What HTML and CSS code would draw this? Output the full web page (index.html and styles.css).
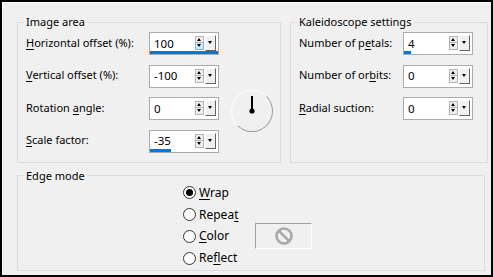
FILE: index.html
```html
<!DOCTYPE html>
<html>
<head>
<meta charset="utf-8">
<link rel="stylesheet" href="styles.css">
</head>
<body>
<div class="window">
  <div class="top">
    <fieldset class="group group-image">
      <legend>Image area</legend>
      <div class="form form-image">
        <span class="lbl"><u>H</u>orizontal offset (%):</span>
        <div class="spin"><span class="val">100</span><span class="arrows"><span class="up"></span><span class="down hot"></span></span><span class="drop"></span><span class="bar" style="width:68px"></span></div>

        <span class="lbl"><u>V</u>ertical offset (%):</span>
        <div class="spin"><span class="val">-100</span><span class="arrows"><span class="up"></span><span class="down"></span></span><span class="drop"></span></div>

        <span class="lbl">Rotation <u>a</u>ngle:</span>
        <div class="spin"><span class="val">0</span><span class="arrows"><span class="up"></span><span class="down"></span></span><span class="drop"></span></div>

        <span class="lbl"><u>S</u>cale factor:</span>
        <div class="spin"><span class="val">-35</span><span class="arrows"><span class="up"></span><span class="down"></span></span><span class="drop"></span><span class="bar" style="width:21px"></span></div>

        <div class="dial">
          <svg width="42" height="42" viewBox="0 0 42 42">
            <line x1="21" y1="6" x2="21" y2="21" stroke="#000" stroke-width="2"/>
            <circle cx="21" cy="21" r="2.6" fill="#000"/>
          </svg>
        </div>
      </div>
    </fieldset>

    <fieldset class="group group-kaleido">
      <legend>Kaleidoscope settings</legend>
      <div class="form form-kaleido">
        <span class="lbl">Number of p<u>e</u>tals:</span>
        <div class="spin"><span class="val">4</span><span class="arrows"><span class="up"></span><span class="down"></span></span><span class="drop"></span><span class="bar" style="width:7px"></span></div>

        <span class="lbl">Number of or<u>b</u>its:</span>
        <div class="spin"><span class="val">0</span><span class="arrows"><span class="up"></span><span class="down"></span></span><span class="drop"></span></div>

        <span class="lbl"><u>R</u>adial suction:</span>
        <div class="spin"><span class="val">0</span><span class="arrows"><span class="up"></span><span class="down"></span></span><span class="drop"></span></div>
      </div>
    </fieldset>
  </div>

  <fieldset class="group group-edge">
    <legend>Edge mode</legend>
    <div class="radios">
      <label class="opt"><span class="radio checked"></span><span><u>W</u>rap</span></label>
      <label class="opt"><span class="radio"></span><span>Repea<u>t</u></span></label>
      <label class="opt"><span class="radio"></span><span><u>C</u>olor</span></label>
      <div class="swatch">
        <svg width="20" height="20" viewBox="0 0 20 20">
          <circle cx="10" cy="10" r="7.5" fill="none" stroke="#a8a8a8" stroke-width="2.6"/>
          <line x1="4.8" y1="4.8" x2="15.2" y2="15.2" stroke="#a8a8a8" stroke-width="2.6"/>
        </svg>
      </div>
      <label class="opt"><span class="radio"></span><span>Re<u>f</u>lect</span></label>
    </div>
  </fieldset>
</div>
</body>
</html>
```

FILE: styles.css
```css
html, body {
  margin: 0;
  padding: 0;
  background: #f0f0f0;
}

.window {
  width: 493px;
  height: 277px;
  box-sizing: border-box;
  border: 2px solid #000;
  box-shadow: inset 1px 1px 0 #fff;
  background: #f0f0f0;
  padding: 14px 0 0 15px;
  font-family: "Noto Sans", "Open Sans", sans-serif;
  font-size: 11px;
  color: #000;
}

.top {
  display: flex;
  gap: 9px;
}

.group {
  margin: 0;
  padding: 0 0 0 8px;
  border: 1px solid #dcdcdc;
  min-width: 0;
  box-sizing: border-box;
}

.group legend {
  padding: 0 2px;
  margin-left: -2px;
  line-height: 12px;
}

.group-image {
  width: 264px;
  padding-bottom: 9px;
}

.group-kaleido {
  width: 198px;
}

.form {
  display: grid;
  grid-template-rows: repeat(4, 23px);
  row-gap: 9.67px;
  padding-top: 4px;
}

.form-image {
  grid-template-columns: 123px 70px 1fr;
}

.form-kaleido {
  grid-template-columns: 104px 70px;
  grid-template-rows: repeat(3, 23px);
}

.lbl {
  grid-column: 1;
  align-self: center;
  white-space: nowrap;
  line-height: 14px;
  margin-bottom: 2px;
}

u {
  text-decoration: underline;
  text-underline-offset: 2px;
}

.spin {
  grid-column: 2;
  position: relative;
  box-sizing: border-box;
  width: 70px;
  height: 23px;
  background: #fff;
  border: 1px solid #a9abb2;
  display: flex;
  align-items: center;
  padding: 0 2px 0 4px;
}

.val {
  flex: 1;
  line-height: 14px;
  font-size: 11.5px;
}

.arrows {
  display: flex;
  flex-direction: column;
  width: 9px;
  margin-right: 1px;
  margin-top: -1px;
}

.arrows span {
  position: relative;
  box-sizing: border-box;
  width: 9px;
  height: 7px;
  border: 1px solid #b4b4b4;
  background: #f0f0f0;
}

.arrows .down {
  border-top: none;
  height: 7px;
}

.arrows .hot {
  background: #d6eaf9;
  border-color: #7eb4ea;
}

.arrows .up::after,
.arrows .down::after {
  content: "";
  position: absolute;
  left: 1px;
  width: 0;
  height: 0;
  border-left: 2.5px solid transparent;
  border-right: 2.5px solid transparent;
}

.arrows .up::after {
  top: 1px;
  border-bottom: 3px solid #000;
}

.arrows .down::after {
  top: 1px;
  border-top: 3px solid #000;
}

.drop {
  position: relative;
  box-sizing: border-box;
  width: 11px;
  height: 16px;
  margin-top: -1px;
  background: #f0f0f0;
  border-top: 1px solid #fff;
  border-left: 1px solid #fff;
  border-right: 1px solid #646464;
  border-bottom: 1px solid #646464;
}

.drop::after {
  content: "";
  position: absolute;
  left: 2px;
  top: 5px;
  border-left: 2.5px solid transparent;
  border-right: 2.5px solid transparent;
  border-top: 3px solid #000;
}

.bar {
  position: absolute;
  left: 0;
  bottom: 0;
  height: 3px;
  background: #0078d7;
}

.dial {
  grid-column: 3;
  grid-row: 2 / 5;
  align-self: start;
  margin-top: 25px;
  margin-left: 12px;
  width: 42px;
  height: 42px;
  box-sizing: border-box;
  border-radius: 50%;
  border: 1px solid;
  border-color: #fdfdfd #9a9a9a #9a9a9a #fdfdfd;
}

.dial svg {
  display: block;
  margin: -1px;
}

.group-edge {
  width: 468px;
  margin-top: 7px;
  padding-bottom: 3px;
}

.radios {
  display: grid;
  grid-template-columns: 73px 57px;
  grid-template-rows: repeat(4, 18px);
  row-gap: 3.7px;
  margin-top: 2px;
  margin-left: 157px;
}

.opt {
  grid-column: 1;
  display: flex;
  align-items: center;
  gap: 3px;
  font-size: 12px;
  line-height: 16px;
}

.radio {
  position: relative;
  box-sizing: border-box;
  width: 13px;
  height: 13px;
  border-radius: 50%;
  border: 1px solid #333;
  background: #fff;
  flex: none;
}

.radio.checked::after {
  content: "";
  position: absolute;
  left: 2px;
  top: 2px;
  width: 7px;
  height: 7px;
  border-radius: 50%;
  background: #000;
}

.swatch {
  grid-column: 2;
  grid-row: 3;
  align-self: center;
  box-sizing: border-box;
  width: 57px;
  height: 26px;
  margin-left: -1px;
  border-top: 1px solid #a0a0a0;
  border-left: 1px solid #a0a0a0;
  border-right: 1px solid #fff;
  border-bottom: 1px solid #fff;
  display: flex;
  align-items: center;
  justify-content: center;
}
```
